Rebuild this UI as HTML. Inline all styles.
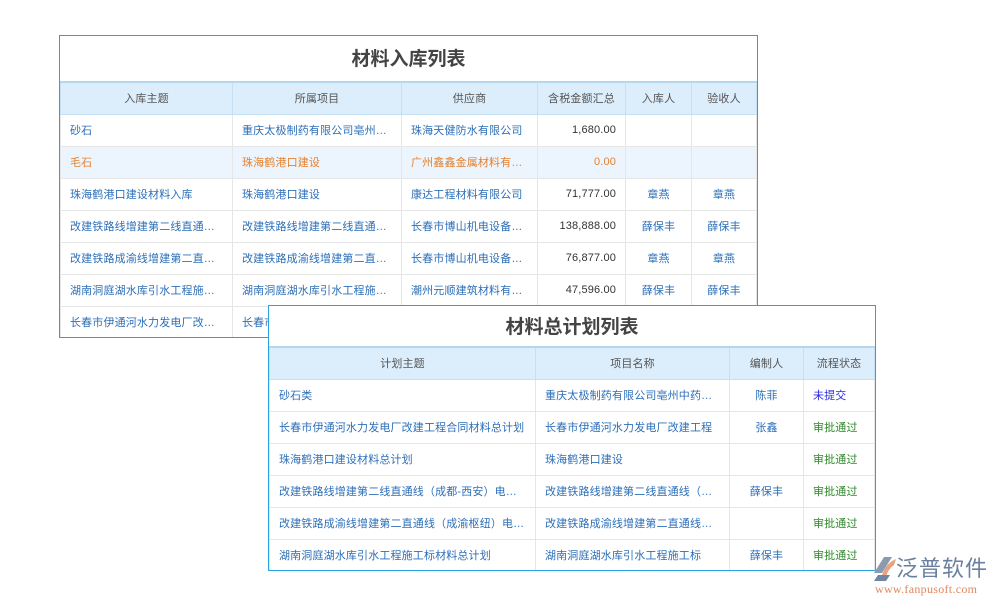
<!DOCTYPE html>
<html><head><meta charset="utf-8"><style>
*{margin:0;padding:0;box-sizing:border-box}
body{width:1000px;height:600px;background:#fff;position:relative;overflow:hidden;font-family:"Liberation Sans","Noto Sans CJK SC",sans-serif;font-size:11px;letter-spacing:0.15px}
.box{position:absolute;background:#fff;border:1px solid #29a3e0}
.title{text-align:center;font-weight:bold;font-size:19px;color:#444;letter-spacing:0}
table{border-collapse:collapse;table-layout:fixed;width:100%}
th{background:#dcedfb;color:#555;font-weight:normal;height:32px;border:1px solid #c5dff3;border-top:2px solid #b5d6ef}
td{height:32px;border:1px solid #e6e6e6;color:#2d6fb8;padding:0 9px;white-space:nowrap;overflow:hidden;text-overflow:ellipsis}
tr.hl td{background:#ecf5fd;color:#e5812f}
td.n{text-align:right;color:#333}
td.c{text-align:center}
.g{color:#2f8a2b!important}
.p{color:#2a2adc!important}
</style></head><body>
<div class="box" style="left:59px;top:35px;width:699px;height:303px;overflow:hidden">
<div class="title" style="height:45px;line-height:48px">材料入库列表</div>
<table>
<colgroup><col style="width:172px"><col style="width:169px"><col style="width:136px"><col style="width:88px"><col style="width:66px"><col></colgroup>
<tr><th>入库主题</th><th>所属项目</th><th>供应商</th><th>含税金额汇总</th><th>入库人</th><th>验收人</th></tr>
<tr><td>砂石</td><td>重庆太极制药有限公司亳州…</td><td>珠海天健防水有限公司</td><td class="n">1,680.00</td><td></td><td></td></tr>
<tr class="hl"><td>毛石</td><td>珠海鹤港口建设</td><td>广州鑫鑫金属材料有…</td><td class="n" style="color:#e5812f">0.00</td><td></td><td></td></tr>
<tr><td>珠海鹤港口建设材料入库</td><td>珠海鹤港口建设</td><td>康达工程材料有限公司</td><td class="n">71,777.00</td><td class="c">章燕</td><td class="c">章燕</td></tr>
<tr><td>改建铁路线增建第二线直通…</td><td>改建铁路线增建第二线直通…</td><td>长春市博山机电设备…</td><td class="n">138,888.00</td><td class="c">薛保丰</td><td class="c">薛保丰</td></tr>
<tr><td>改建铁路成渝线增建第二直…</td><td>改建铁路成渝线增建第二直…</td><td>长春市博山机电设备…</td><td class="n">76,877.00</td><td class="c">章燕</td><td class="c">章燕</td></tr>
<tr><td>湖南洞庭湖水库引水工程施…</td><td>湖南洞庭湖水库引水工程施…</td><td>潮州元顺建筑材料有…</td><td class="n">47,596.00</td><td class="c">薛保丰</td><td class="c">薛保丰</td></tr>
<tr><td>长春市伊通河水力发电厂改…</td><td>长春市伊通河水力发电厂改…</td><td></td><td></td><td></td><td></td></tr>
</table></div>
<div class="box" style="left:268px;top:305px;width:608px;height:266px;overflow:hidden">
<div class="title" style="height:40px;line-height:43px">材料总计划列表</div>
<table>
<colgroup><col style="width:266px"><col style="width:194px"><col style="width:74px"><col></colgroup>
<tr><th>计划主题</th><th>项目名称</th><th>编制人</th><th>流程状态</th></tr>
<tr><td>砂石类</td><td>重庆太极制药有限公司亳州中药…</td><td class="c">陈菲</td><td class="p">未提交</td></tr>
<tr><td>长春市伊通河水力发电厂改建工程合同材料总计划</td><td>长春市伊通河水力发电厂改建工程</td><td class="c">张鑫</td><td class="g">审批通过</td></tr>
<tr><td>珠海鹤港口建设材料总计划</td><td>珠海鹤港口建设</td><td></td><td class="g">审批通过</td></tr>
<tr><td>改建铁路线增建第二线直通线（成都-西安）电…</td><td>改建铁路线增建第二线直通线（…</td><td class="c">薛保丰</td><td class="g">审批通过</td></tr>
<tr><td>改建铁路成渝线增建第二直通线（成渝枢纽）电…</td><td>改建铁路成渝线增建第二直通线…</td><td></td><td class="g">审批通过</td></tr>
<tr><td>湖南洞庭湖水库引水工程施工标材料总计划</td><td>湖南洞庭湖水库引水工程施工标</td><td class="c">薛保丰</td><td class="g">审批通过</td></tr>
</table></div>
<svg style="position:absolute;left:870px;top:553px" width="30" height="30" viewBox="0 0 30 30">
<path d="M4 20 L14 4 L22 4 L12 20 Z" fill="#8a9bb0"/>
<path d="M12 22 Q16 10 26 6 L24 12 Q18 16 16 24 Z" fill="#e6a37e"/>
<path d="M8 22 L20 22 L16 28 L4 28 Z" fill="#6e85a3"/>
</svg>
<div style="position:absolute;left:896px;top:551px;font-size:22px;color:#6a7fa0;letter-spacing:1px;font-family:'Noto Sans CJK SC',sans-serif">泛普软件</div>
<div style="position:absolute;left:875px;top:582px;font-size:12px;color:#e0875e;font-family:'Liberation Serif',serif;letter-spacing:0.3px">www.fanpusoft.com</div>
</body></html>
